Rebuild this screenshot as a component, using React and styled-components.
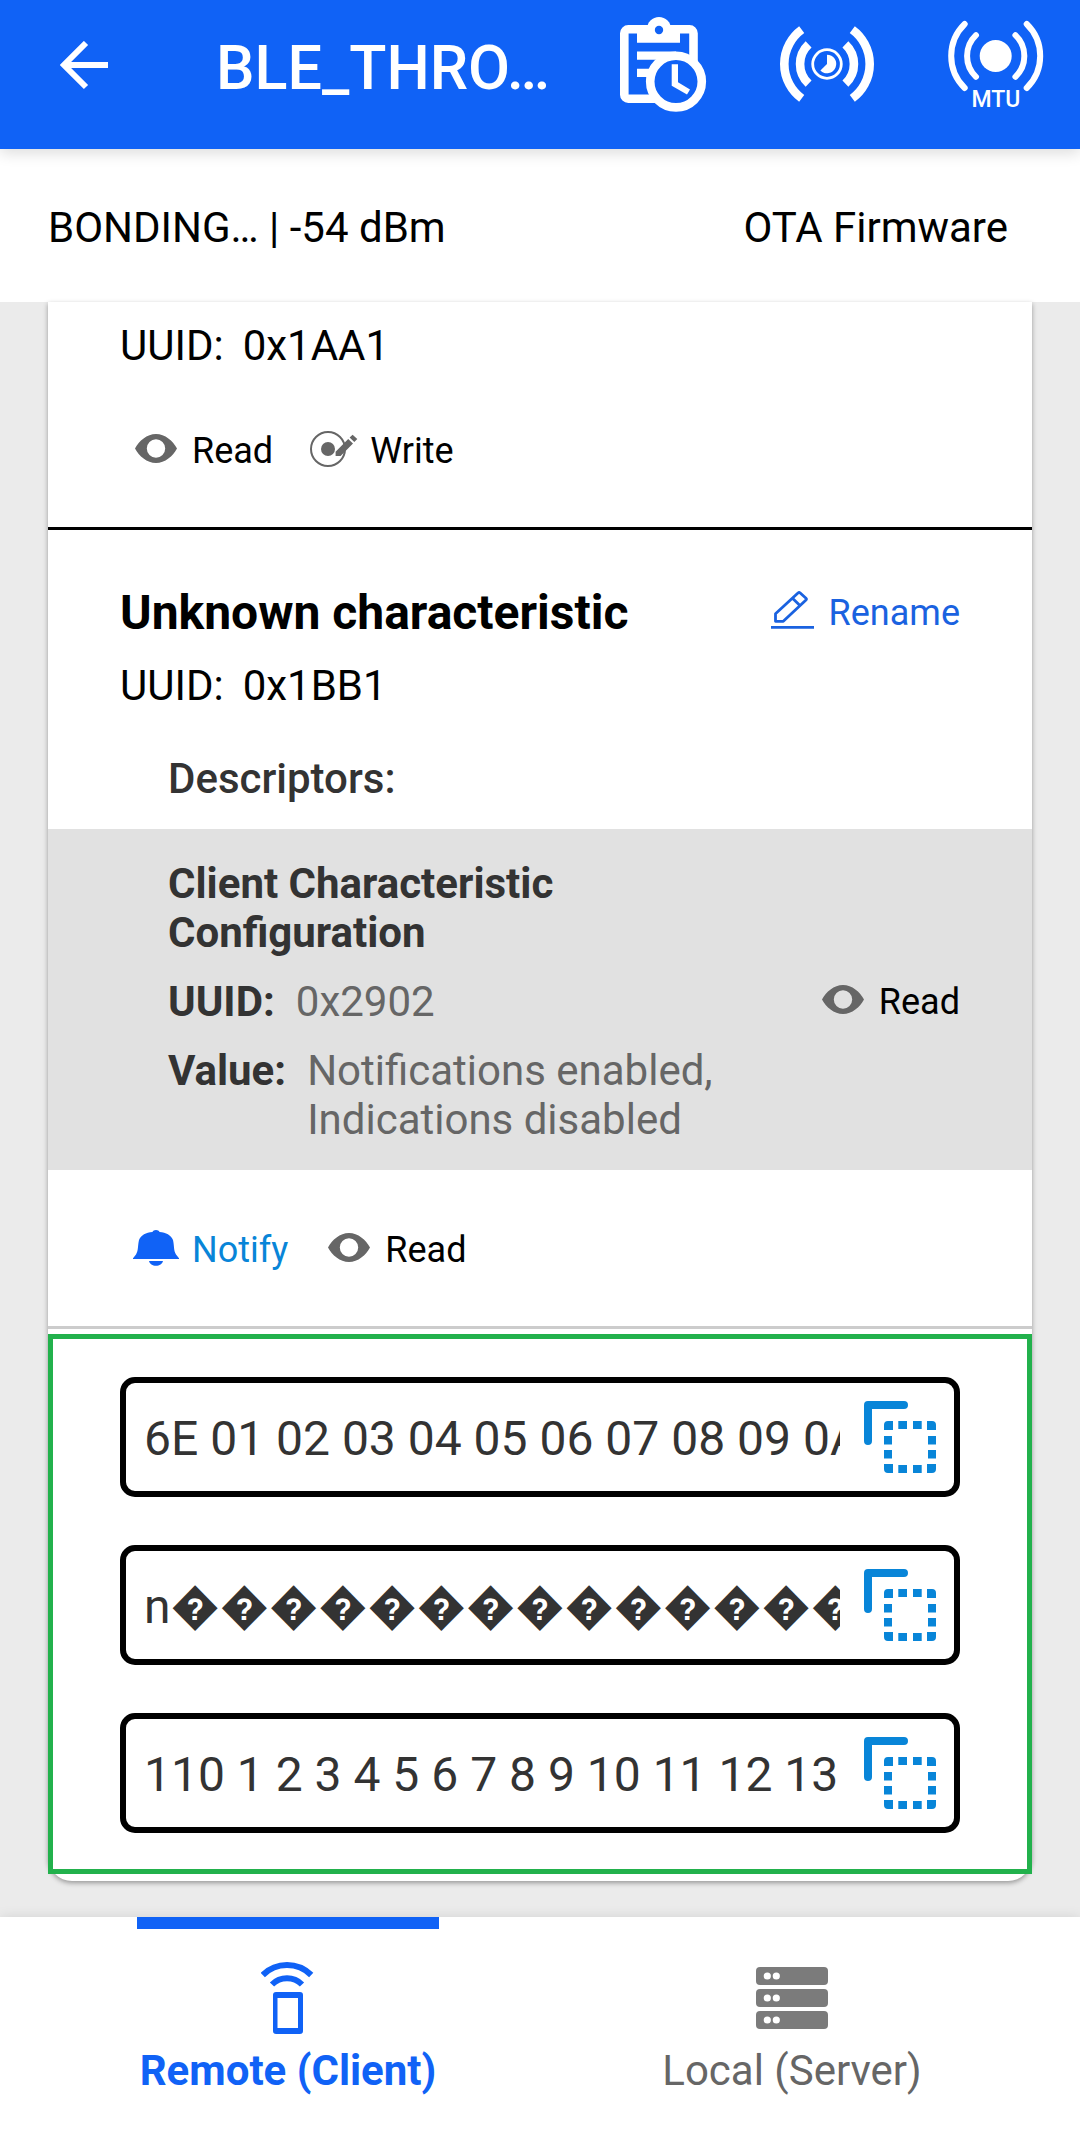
import React, { useState } from "react";
import styled, { createGlobalStyle } from "styled-components";

const color = {
  brand: "#1062f6",
  link: "#1a62e0",
  cyan: "#0885d8",
  grey: "#666666",
  dark: "#333333",
  canvas: "#ebebeb",
};

const GlobalStyle = createGlobalStyle`
  *, *::before, *::after { box-sizing: border-box; }
  body {
    margin: 0;
    background: ${color.canvas};
    color: #000;
    font-family: Roboto, "DejaVu Sans", sans-serif;
    font-size: 42px;
    line-height: 50px;
  }
  button, input { font: inherit; color: inherit; }
  h1, h2, h3, p, dl, dt, dd { margin: 0; }
  svg { display: block; flex: none; }
`;

const Screen = styled.div`
  min-height: 100vh;
  display: flex;
  flex-direction: column;
`;

const PlainButton = styled.button`
  display: flex;
  align-items: center;
  padding: 0;
  border: 0;
  background: none;
  cursor: pointer;
`;

const Header = styled.header`
  position: relative;
  z-index: 1;
  display: flex;
  align-items: center;
  padding: 16px 32px 29px 60px;
  background: ${color.brand};
  color: #fff;
  box-shadow: 0 4px 14px rgba(0, 0, 0, 0.14);
`;

const Title = styled.h1`
  flex: 1;
  min-width: 0;
  padding-left: 108px;
  font-size: 61px;
  line-height: 72px;
  font-weight: 500;
  white-space: nowrap;
`;

const HeaderActions = styled.div`
  display: flex;
  gap: 62px;
`;

const StatusBar = styled.div`
  display: flex;
  justify-content: space-between;
  padding: 54px 72px 49px 48px;
  background: #fff;
`;

const Content = styled.main`
  flex: 1;
  padding: 0 48px 36px;
`;

const Card = styled.article`
  padding-bottom: 7px;
  background: #fff;
  border-radius: 0 0 24px 24px;
  box-shadow: 0 2px 5px rgba(0, 0, 0, 0.36);
`;

const Characteristic = styled.section`
  padding-top: ${(p) => p.$top}px;
  border-bottom: 3px solid ${(p) => p.$line};
`;

const TitleRow = styled.div`
  display: flex;
  justify-content: space-between;
  align-items: center;
  padding: 0 72px;
  margin-bottom: 20px;
`;

const Name = styled.h2`
  font-size: 48px;
  line-height: 56px;
  font-weight: 700;
`;

const Property = styled.p`
  display: flex;
  gap: 19px;
  padding: 0 72px;
`;

const Actions = styled.div`
  display: flex;
  gap: 38px;
  padding: 59px 72px 55px 85px;
`;

const ActionButton = styled(PlainButton)`
  gap: 13px;
  font-size: 36px;
  line-height: 42px;
  color: ${(p) => p.$color || "#000"};
`;

const IconSlot = styled.span`
  display: flex;
  align-items: center;
  justify-content: center;
  width: 46px;
  height: 42px;
`;

const DescriptorsHeading = styled.h3`
  padding: 43px 120px 25px;
  font-size: 42px;
  font-weight: 500;
  color: ${color.dark};
`;

const Descriptor = styled.div`
  display: flex;
  align-items: center;
  gap: 60px;
  padding: 30px 72px 26px 120px;
  background: #e1e1e1;
  line-height: 49px;
`;

const DescriptorInfo = styled.dl`
  flex: 1;
  min-width: 0;
  display: flex;
  flex-direction: column;
  gap: 20px;
`;

const DescriptorRow = styled.div`
  display: flex;
  gap: 21px;
`;

const Term = styled.dt`
  font-weight: 700;
  color: ${color.dark};
`;

const Detail = styled.dd`
  color: ${color.grey};
`;

const Values = styled.section`
  display: flex;
  flex-direction: column;
  gap: 48px;
  margin-top: 5px;
  padding: 38px 67px 36px;
  border: 5px solid #22b14c;
`;

const Field = styled.div`
  display: flex;
  align-items: center;
  gap: 24px;
  height: 120px;
  padding: 0 18px;
  border: 6px solid #000;
  border-radius: 15px;
`;

const FieldInput = styled.input`
  flex: 1;
  min-width: 0;
  height: 100%;
  padding: 3px 0 0;
  border: 0;
  outline: 0;
  background: transparent;
  font-size: 48px;
  color: ${color.dark};
`;

const TabBar = styled.nav`
  display: grid;
  grid-template-columns: 1fr 1fr;
  justify-items: center;
  padding: 0 36px;
  background: #fff;
  box-shadow: 0 0 12px rgba(0, 0, 0, 0.1);
`;

const Tab = styled(PlainButton)`
  flex-direction: column;
  gap: 12px;
  padding: 33px 3px 45px;
  border-top: 12px solid ${(p) => (p.$active ? color.brand : "transparent")};
  font-weight: ${(p) => (p.$active ? 700 : 400)};
  color: ${(p) => (p.$active ? color.brand : color.grey)};
`;

const TabIcon = styled.span`
  display: flex;
  align-items: center;
  height: 72px;
`;

const MtuLabel = styled.text`
  font-size: 23px;
  font-weight: 500;
  text-anchor: middle;
  fill: #fff;
`;

const BackIcon = () => (
  <svg width="48" height="54" viewBox="0 0 48 54" fill="none" stroke="currentColor" strokeWidth="6">
    <path d="M26 2 4 24l22 22M5 24h43" />
  </svg>
);

const LogIcon = () => (
  <svg width="104" height="104" viewBox="0 0 104 104">
    <rect x="12.3" y="13.3" width="69.2" height="69.4" rx="4" fill="none" stroke="#fff" strokeWidth="8.6" />
    <path d="M25 9h43v17.7H25zM25 35.5h39v8.3H25zM25 52.7h22V61H25z" fill="#fff" />
    <circle cx="47" cy="13" r="12" fill="#fff" />
    <circle cx="47" cy="14" r="4.2" fill={color.brand} />
    <circle cx="64" cy="65.6" r="25.8" fill={color.brand} stroke="#fff" strokeWidth="8.6" />
    <path d="M59.7 48.3H66v18l12 7.2-3 5-15.3-8.7z" fill="#fff" />
  </svg>
);

const IntervalIcon = () => (
  <svg width="104" height="104" viewBox="0 0 104 104" fill="none" stroke="#fff" strokeWidth="8.6">
    <path d="M23.7 13.6A42.7 42.7 0 0 0 23.7 82.4M74.3 13.6A42.7 42.7 0 0 1 74.3 82.4" />
    <path d="M30.6 28.3A27 27 0 0 0 30.6 67.7M67.4 28.3A27 27 0 0 1 67.4 67.7" />
    <circle cx="49" cy="48" r="14.3" strokeWidth="2.8" />
    <path d="M49 38.7A9.3 9.3 0 1 1 42.4 54.6L49 48z" fill="#fff" stroke="none" />
  </svg>
);

const MtuIcon = () => (
  <svg width="104" height="104" viewBox="0 0 104 104" fill="none" stroke="#fff" strokeWidth="6" strokeLinecap="round">
    <path d="M20.7 8A44.7 44.7 0 0 0 20.7 72M82.7 8A44.7 44.7 0 0 1 82.7 72" />
    <path d="M32 19.2A28.7 28.7 0 0 0 32 60.8M71.4 19.2A28.7 28.7 0 0 1 71.4 60.8" />
    <circle cx="51.7" cy="40" r="16" fill="#fff" stroke="none" />
    <MtuLabel x="52" y="91" stroke="none">MTU</MtuLabel>
  </svg>
);

const EyeIcon = () => (
  <svg width="42" height="34" viewBox="0 0 42 34" fill={color.grey} fillRule="evenodd">
    <path d="M0 14.5C4 7 12 0 21 0s17 7 21 14.5C38 22 30 29 21 29S4 22 0 14.5zM21 5.3a9.2 9.2 0 1 0 0 18.4 9.2 9.2 0 0 0 0-18.4z" />
  </svg>
);

const WriteIcon = () => (
  <svg width="48" height="40" viewBox="0 0 48 40" fill={color.grey}>
    <circle cx="18" cy="18" r="17" fill="none" stroke={color.grey} strokeWidth="2" />
    <circle cx="18" cy="18" r="7" />
    <path d="M25.6 20.8 38.2 8l4.8 4.5L30.6 25h-5zM39.6 6.6l3-2.9 4.7 4.2-3 3z" />
  </svg>
);

const BellIcon = () => (
  <svg width="46" height="40" viewBox="0 0 46 40" fill={color.brand}>
    <path d="M23 0c1.8 0 3 .8 3.6 2C33 2.6 38 5 40 10c1.4 6 .4 10 3 14.500L46.500 29h-47L3 24.500C5.600 20 4.600 16 6 10c2-5 7-7.400 13.400-8C20 .8 21.200 0 23 0zM16 31h14c-.6 3-3.600 4.800-7 4.800S16.600 34 16 31z" />
  </svg>
);

const PencilIcon = () => (
  <svg width="43" height="44" viewBox="0 0 43 44" fill="none" stroke={color.link} strokeWidth="2.8" strokeLinejoin="round">
    <path d="M29.2 2 35 7.3q.8.8 0 1.6L12.3 30.3H4.500v-7.500L27 2q1.100-.9 2.200 0zM21.500 7.300l7.700 7.500M0 36.400h43" />
  </svg>
);

const CopyIcon = () => (
  <svg width="72" height="72" viewBox="0 0 72 72" fill={color.cyan}>
    <path d="M4 40V4h36" fill="none" stroke={color.cyan} strokeWidth="8" strokeLinecap="round" strokeLinejoin="round" />
    <path d="M24 20h5v9h-9v-5a4 4 0 0 1 4-4zM63 20h5a4 4 0 0 1 4 4v5h-9zM63 63h9v5a4 4 0 0 1-4 4h-5zM20 63h9v9h-5a4 4 0 0 1-4-4z" />
    <path d="M34.300 20h8.700v8h-8.700zM49 20h8.700v8H49zM34.300 64h8.700v8h-8.700zM49 64h8.700v8H49zM20 35h8v8.500h-8zM20 49h8v8.500h-8zM64 35h8v8.500h-8zM64 49h8v8.500h-8z" />
  </svg>
);

const RemoteIcon = () => (
  <svg width="54" height="72" viewBox="0 0 54 72" fill="none" stroke="currentColor" strokeWidth="6">
    <path d="M1.8 13a34.300 34.300 0 0 1 48.400 0M11 22.500a21.200 21.200 0 0 1 30 0" />
    <path
      d="M15 30h24a3 3 0 0 1 3 3v36a3 3 0 0 1-3 3H15a3 3 0 0 1-3-3V33a3 3 0 0 1 3-3zM16.500 36v30H37V36z"
      fill="currentColor"
      fillRule="evenodd"
      stroke="none"
    />
  </svg>
);

const ServerIcon = () => (
  <svg width="72" height="62" viewBox="0 0 72 62">
    {[0, 22, 44].map((y) => (
      <g key={y}>
        <rect y={y} width="72" height="18" rx="4" fill="#7b7b7b" />
        <circle cx="11.3" cy={y + 9} r="3.6" fill="#fff" />
        <circle cx="20.3" cy={y + 9} r="3.6" fill="#fff" />
      </g>
    ))}
  </svg>
);

const Action = ({ icon: Icon, children, tone }) => (
  <ActionButton type="button" $color={tone}>
    <IconSlot>
      <Icon />
    </IconSlot>
    {children}
  </ActionButton>
);

const values = [
  { label: "Hex value", text: "6E 01 02 03 04 05 06 07 08 09 0A 0B 0C" },
  { label: "ASCII value", text: "n" + "\uFFFD".repeat(18) },
  { label: "Decimal value", text: "110 1 2 3 4 5 6 7 8 9 10 11 12 13 14 15" },
];

const tabs = [
  { id: "remote", label: "Remote (Client)", icon: RemoteIcon },
  { id: "local", label: "Local (Server)", icon: ServerIcon },
];

export default function App() {
  const [active, setActive] = useState("remote");

  return (
    <Screen>
      <GlobalStyle />
      <Header>
        <PlainButton type="button" aria-label="Back">
          <BackIcon />
        </PlainButton>
        <Title>BLE_THRO…</Title>
        <HeaderActions>
          <PlainButton type="button" aria-label="Logs">
            <LogIcon />
          </PlainButton>
          <PlainButton type="button" aria-label="Connection interval">
            <IntervalIcon />
          </PlainButton>
          <PlainButton type="button">
            <MtuIcon />
          </PlainButton>
        </HeaderActions>
      </Header>

      <StatusBar>
        <span>BONDING… | -54 dBm</span>
        <PlainButton type="button">OTA Firmware</PlainButton>
      </StatusBar>

      <Content>
        <Card>
          <Characteristic $top={19} $line="#000">
            <Property>
              <span>UUID:</span>
              <span>0x1AA1</span>
            </Property>
            <Actions>
              <Action icon={EyeIcon}>Read</Action>
              <Action icon={WriteIcon}>Write</Action>
            </Actions>
          </Characteristic>

          <Characteristic $top={55} $line="#cccccc">
            <TitleRow>
              <Name>Unknown characteristic</Name>
              <Action icon={PencilIcon} tone={color.link}>
                Rename
              </Action>
            </TitleRow>
            <Property>
              <span>UUID:</span>
              <span>0x1BB1</span>
            </Property>
            <DescriptorsHeading>Descriptors:</DescriptorsHeading>
            <Descriptor>
              <DescriptorInfo>
                <Term>Client Characteristic Configuration</Term>
                <DescriptorRow>
                  <Term>UUID:</Term>
                  <Detail>0x2902</Detail>
                </DescriptorRow>
                <DescriptorRow>
                  <Term>Value:</Term>
                  <Detail>Notifications enabled, Indications disabled</Detail>
                </DescriptorRow>
              </DescriptorInfo>
              <Action icon={EyeIcon}>Read</Action>
            </Descriptor>
            <Actions>
              <Action icon={BellIcon} tone={color.cyan}>
                Notify
              </Action>
              <Action icon={EyeIcon}>Read</Action>
            </Actions>
          </Characteristic>

          <Values>
            {values.map(({ label, text }) => (
              <Field key={label}>
                <FieldInput aria-label={label} value={text} readOnly />
                <PlainButton type="button" aria-label={`Copy ${label}`}>
                  <CopyIcon />
                </PlainButton>
              </Field>
            ))}
          </Values>
        </Card>
      </Content>

      <TabBar>
        {tabs.map(({ id, label, icon: Icon }) => (
          <Tab key={id} type="button" $active={id === active} onClick={() => setActive(id)}>
            <TabIcon>
              <Icon />
            </TabIcon>
            {label}
          </Tab>
        ))}
      </TabBar>
    </Screen>
  );
}
